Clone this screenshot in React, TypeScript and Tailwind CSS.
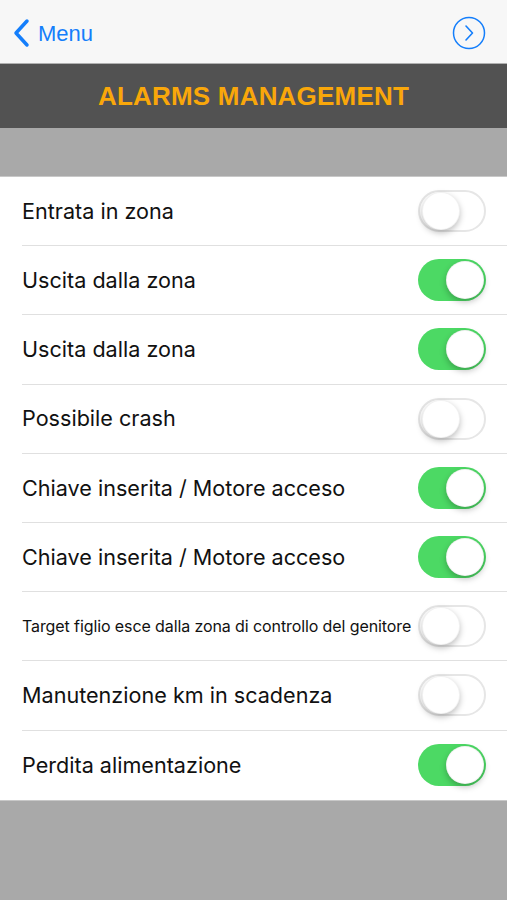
import React from 'react';

const rows: { label: string; on: boolean; small?: boolean }[] = [
  { label: 'Entrata in zona', on: false },
  { label: 'Uscita dalla zona', on: true },
  { label: 'Uscita dalla zona', on: true },
  { label: 'Possibile crash', on: false },
  { label: 'Chiave inserita / Motore acceso', on: true },
  { label: 'Chiave inserita / Motore acceso', on: true },
  { label: 'Target figlio esce dalla zona di controllo del genitore', on: false, small: true },
  { label: 'Manutenzione km in scadenza', on: false },
  { label: 'Perdita alimentazione', on: true },
];

function Toggle({ on }: { on: boolean }) {
  return (
    <div
      className={`shrink-0 w-[68px] h-[42px] rounded-full flex items-center p-[2px] ${
        on ? 'bg-[#4cd964] justify-end' : 'bg-white border-2 border-[#e6e6e6] justify-start p-0'
      }`}
    >
      <div className="w-[38px] h-[38px] rounded-full bg-white shadow-[0_3px_6px_rgba(0,0,0,0.25)] border border-black/5" />
    </div>
  );
}

export default function App() {
  return (
    <div className="w-[507px] h-[900px] flex flex-col bg-[#a9a9a9] font-['Inter','Liberation_Sans',Arial,sans-serif]">
      {/* nav bar */}
      <div className="h-[64px] bg-[#f7f7f7] flex items-center justify-between px-3 pt-[3px] border-b border-[#b0b0b0]">
        <div className="flex items-center gap-[6px] text-[#147efb]">
          <svg width="20" height="30" viewBox="0 0 20 30" fill="none">
            <path d="M15 3 L4 15 L15 27" stroke="#147efb" strokeWidth="3.5" strokeLinecap="round" strokeLinejoin="round" />
          </svg>
          <span className="text-[22px] font-['Liberation_Sans',Arial,sans-serif]">Menu</span>
        </div>
        <svg width="34" height="34" viewBox="0 0 34 34" fill="none" className="mr-[9px]">
          <circle cx="17" cy="17" r="15.5" stroke="#147efb" strokeWidth="1.5" />
          <path d="M14 10 L20.5 17 L14 24" stroke="#147efb" strokeWidth="1.6" strokeLinecap="round" strokeLinejoin="round" />
        </svg>
      </div>

      {/* title bar */}
      <div className="h-[64px] bg-[#525252] flex items-center justify-center">
        <h1 className="text-[#f9a70a] text-[26px] font-bold tracking-[0.2px] font-['Liberation_Sans',Arial,sans-serif]">
          ALARMS MANAGEMENT
        </h1>
      </div>

      <div className="h-[49px] bg-[#a9a9a9] border-b border-[#c8c8c8]" />

      {/* list */}
      <div className="bg-white">
        {rows.map((r, i) => (
          <div key={i} className="pl-[22px]">
            <div
              className={`h-[69.2px] flex items-center justify-between pr-[21px] ${
                i < rows.length - 1 ? 'border-b border-[#e0e0e0]' : ''
              }`}
            >
              <span className={`text-[#111] whitespace-nowrap ${r.small ? 'text-[16px] tracking-[-0.1px]' : 'text-[21.6px]'}`}>
                {r.label}
              </span>
              <Toggle on={r.on} />
            </div>
          </div>
        ))}
      </div>

      <div className="flex-1 bg-[#a9a9a9] border-t border-[#c8c8c8]" />
    </div>
  );
}
